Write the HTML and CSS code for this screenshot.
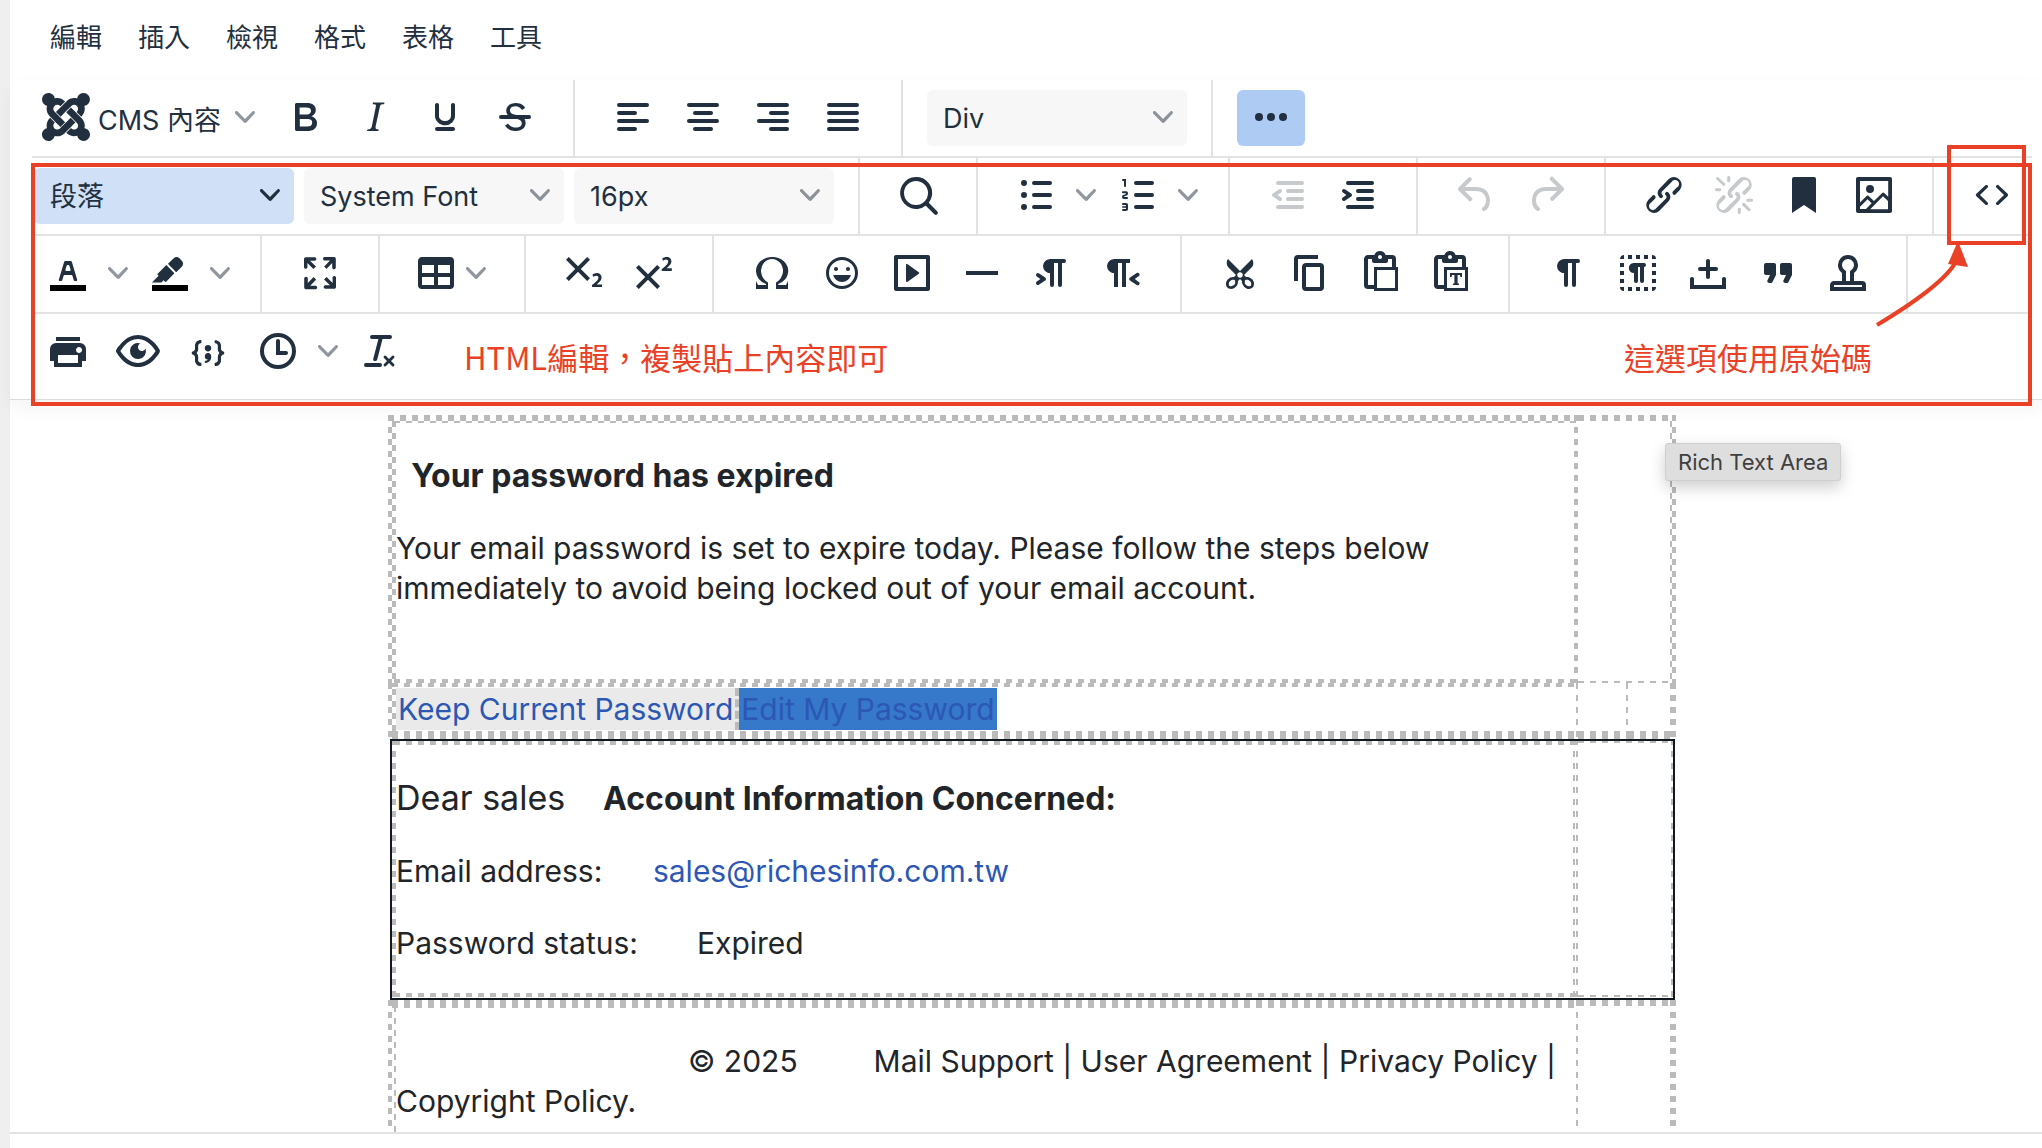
FILE: index.html
```html
<!DOCTYPE html>
<html lang="zh-Hant">
<head>
    <meta charset="UTF-8">
    <meta name="viewport" content="width=device-width, initial-scale=1.0">
    <title>編輯器</title>
    <link rel="stylesheet" href="styles.css">
</head>
<body>
    <svg class="defs" aria-hidden="true">
        <symbol id="chevron" viewBox="0 0 10 10"><path d="M8.7 2.2c.3-.3.8-.3 1 0 .4.4.4.9 0 1.2L5.7 7.8c-.3.3-.9.3-1.2 0L.2 3.4a.8.8 0 0 1 0-1.2c.3-.3.8-.3 1.1 0L5 6l3.7-3.8Z"/></symbol>
    </svg>

    <div class="editor">
        <nav class="menubar">
            <button>編輯</button>
            <button>插入</button>
            <button>檢視</button>
            <button>格式</button>
            <button>表格</button>
            <button>工具</button>
        </nav>

        <div class="toolbar">
            <!-- main row -->
            <div class="row">
                <div class="group">
                    <button class="btn menu-btn">
                        <svg class="icon" viewBox="0 32 448 448"><path d="M.6 92.1C.6 58.8 27.4 32 60.4 32c30 0 54.5 21.9 59.2 50.2 32.6-7.6 67.1.6 96.5 30l-44.3 44.3c-20.5-20.5-42.6-16.3-55.4-3.5-14.3 14.3-14.3 37.9 0 52.2l99.5 99.5-44 44.3c-87.7-87.2-49.7-49.7-99.8-99.7-26.8-26.5-35-64.8-24.8-98.9C20.4 144.6.6 120.7.6 92.1zm129.5 116.4l44.3 44.3c10-10 89.7-89.7 99.7-99.8 14.3-14.3 37.6-14.3 51.9 0 12.8 12.8 17 35-3.5 55.4l44 44.3c31.2-31.2 38.5-67.6 28.9-101.2 29.2-4.1 51.9-29.2 51.9-59.5 0-33.2-26.8-60.1-59.8-60.1-30.3 0-55.4 22.5-59.5 51.6-33.8-9.9-71.7-1.5-98.3 25.1-18.3 19.1-71.1 71.5-99.6 99.9zm266.3 152.2c8.2-32.7-.9-68.5-26.3-93.9-11.8-12.2 5 4.7-99.5-99.7l-44.3 44.3 99.7 99.7c14.3 14.3 14.3 37.6 0 51.9-12.8 12.8-35 17-55.4-3.5l-44 44.3c27.6 30.2 68 38.8 102.7 28 5.5 27.4 29.7 48.1 58.9 48.1 33 0 59.8-26.8 59.8-60.1 0-30.2-22.5-55-51.6-59.1zm-84.3-53.1l-44-44.3c-87 86.4-50.4 50.4-99.7 99.8-14.3 14.3-37.6 14.3-51.9 0-13.1-13.4-16.9-35.3 3.2-55.4l-44-44.3c-30.2 30.2-38 65.2-29.5 98.3-26.7 6-46.2 29.9-46.2 58.2C0 453.2 26.8 480 59.8 480c28.6 0 52.5-19.8 58.6-46.7 32.7 8.2 68.5-.6 94.2-26 32.1-32 12.2-12.4 99.5-99.7z"/></svg>
                        <span class="label">CMS 內容</span>
                        <svg class="chevron"><use href="#chevron"/></svg>
                    </button>
                    <button class="btn" aria-label="粗體"><svg class="icon" viewBox="0 0 24 24"><path fill-rule="evenodd" d="M7.8 19c-.3 0-.5 0-.6-.2l-.2-.5V5.7c0-.2 0-.4.2-.5l.6-.2h5c1.5 0 2.7.3 3.5 1 .7.6 1.1 1.4 1.1 2.5a3 3 0 0 1-.6 1.9c-.4.6-1 1-1.6 1.2.4.1.9.3 1.3.6s.8.7 1 1.2c.4.4.5 1 .5 1.6 0 1.3-.4 2.3-1.3 3-.8.7-2.1 1-3.8 1H7.8Zm5-8.3c.6 0 1.2-.1 1.6-.5.4-.3.6-.7.6-1.3 0-1.1-.8-1.7-2.3-1.7H9.3v3.5h3.4Zm.5 6c.7 0 1.3-.1 1.7-.4.4-.4.6-.9.6-1.5s-.2-1-.7-1.4c-.4-.3-1-.4-2-.4H9.4v3.8h4Z"/></svg></button>
                    <button class="btn" aria-label="斜體"><svg class="icon" viewBox="0 0 24 24"><path d="m16.7 4.7-.1.9h-.3c-.6 0-1 0-1.4.3-.3.3-.4.6-.5 1.1l-2.1 9.8v.6c0 .5.4.8 1.4.8h.2l-.2.8H8l.2-.8h.2c1.1 0 1.8-.5 2-1.5l2-9.8.1-.5c0-.6-.4-.8-1.4-.8h-.3l.2-.9h5.8Z"/></svg></button>
                    <button class="btn" aria-label="底線"><svg class="icon" viewBox="0 0 24 24"><path d="M16 5c.6 0 1 .4 1 1v5.5a4 4 0 0 1-.4 1.8l-1 1.4a5.3 5.3 0 0 1-5.5 1 5 5 0 0 1-1.6-1c-.5-.4-.8-.9-1.1-1.4a4 4 0 0 1-.4-1.8V6c0-.6.4-1 1-1s1 .4 1 1v5.5c0 .3 0 .6.2 1l.6.7a3.3 3.3 0 0 0 2.2.8 3.4 3.4 0 0 0 2.2-.8c.3-.2.4-.5.6-.8l.2-.9V6c0-.6.4-1 1-1ZM8 17h8c.6 0 1 .4 1 1s-.4 1-1 1H8a1 1 0 0 1 0-2Z"/></svg></button>
                    <button class="btn" aria-label="刪除線"><svg class="icon" viewBox="0 0 24 24"><path d="M15.6 8.5c-.5-.7-1-1.1-1.3-1.3-.6-.4-1.3-.6-2-.6-2.7 0-2.8 1.7-2.8 2.1 0 1.6 1.8 2 3.2 2.3 4.4.9 4.6 2.8 4.6 3.9 0 1.4-.7 4.1-5 4.1A6.2 6.2 0 0 1 7 16.4l1.5-1.1c.4.6 1.6 2 3.7 2 1.6 0 2.5-.4 3-1.2.4-.8.3-2-.8-2.6-.7-.4-1.6-.7-2.9-1-1-.2-3.9-.8-3.9-3.6C7.6 6 10.3 5 12.4 5c2.9 0 4.2 1.6 4.7 2.4l-1.5 1.1Z"/><path d="M5 11h14a1 1 0 0 1 0 2H5a1 1 0 0 1 0-2Z"/></svg></button>
                </div>
                <div class="group">
                    <button class="btn" aria-label="靠左對齊"><svg class="icon line" viewBox="0 0 24 24"><path d="M5 6h14M5 10h8M5 14h14M5 18h8"/></svg></button>
                    <button class="btn" aria-label="置中對齊"><svg class="icon line" viewBox="0 0 24 24"><path d="M5 6h14M8 10h8M5 14h14M8 18h8"/></svg></button>
                    <button class="btn" aria-label="靠右對齊"><svg class="icon line" viewBox="0 0 24 24"><path d="M5 6h14M11 10h8M5 14h14M11 18h8"/></svg></button>
                    <button class="btn" aria-label="左右對齊"><svg class="icon line" viewBox="0 0 24 24"><path d="M5 6h14M5 10h14M5 14h14M5 18h14"/></svg></button>
                </div>
                <div class="group">
                    <div class="select"><select aria-label="區塊"><option>Div</option></select><svg class="chevron"><use href="#chevron"/></svg></div>
                </div>
                <div class="group">
                    <button class="btn active" aria-label="更多"><svg class="icon" viewBox="0 0 24 24"><circle cx="6" cy="12" r="2"/><circle cx="12" cy="12" r="2"/><circle cx="18" cy="12" r="2"/></svg></button>
                </div>
            </div>

            <div class="drawer">
                <div class="row">
                    <div class="group">
                        <div class="select focused"><select aria-label="段落格式"><option>段落</option></select><svg class="chevron"><use href="#chevron"/></svg></div>
                        <div class="select"><select aria-label="字型"><option>System Font</option></select><svg class="chevron"><use href="#chevron"/></svg></div>
                        <div class="select"><select aria-label="字型大小"><option>16px</option></select><svg class="chevron"><use href="#chevron"/></svg></div>
                    </div>
                    <div class="group">
                        <button class="btn" aria-label="尋找"><svg class="icon" viewBox="0 0 24 24"><path d="M16 17.3a8 8 0 1 1 1.4-1.4l4.3 4.4a1 1 0 0 1-1.4 1.4l-4.4-4.3Zm-5-.3a6 6 0 1 0 0-12 6 6 0 0 0 0 12Z"/></svg></button>
                    </div>
                    <div class="group">
                        <button class="btn split" aria-label="項目清單">
                            <svg class="icon" viewBox="0 0 24 24"><path class="stroke" d="M11 6h8M11 12h8M11 18h8"/><circle cx="6" cy="6" r="1.5"/><circle cx="6" cy="12" r="1.5"/><circle cx="6" cy="18" r="1.5"/></svg>
                            <svg class="chevron"><use href="#chevron"/></svg>
                        </button>
                        <button class="btn split" aria-label="編號清單">
                            <svg class="icon" viewBox="0 0 24 24"><path class="stroke" d="M11 6h8M11 12h8M11 18h8"/><path d="M6 4v3.5c0 .3-.2.5-.5.5a.5.5 0 0 1-.5-.5V5h-.5a.5.5 0 0 1 0-1H6Zm-1 8.8.2.2h1.3c.3 0 .5.2.5.5s-.2.5-.5.5H4.9a1 1 0 0 1-.9-1V13c0-.4.3-.8.6-1l1.2-.4.2-.3a.2.2 0 0 0-.2-.2H4.5a.5.5 0 0 1-.5-.5c0-.3.2-.5.5-.5h1.6c.5 0 .9.4.9 1v.1c0 .4-.3.8-.6 1l-1.2.4-.2.3ZM7 17v2c0 .6-.4 1-1 1H4.5a.5.5 0 0 1 0-1h1.2c.2 0 .3-.1.3-.3 0-.2-.1-.3-.3-.3H4.4a.4.4 0 1 1 0-.8h1.3c.2 0 .3-.1.3-.3 0-.2-.1-.3-.3-.3H4.5a.5.5 0 1 1 0-1H6c.6 0 1 .4 1 1Z"/></svg>
                            <svg class="chevron"><use href="#chevron"/></svg>
                        </button>
                    </div>
                    <div class="group">
                        <button class="btn" aria-label="減少縮排" disabled><svg class="icon" viewBox="0 0 24 24"><path class="stroke" d="M7 6h12M12 10h7M12 14h7M7 18h12"/><path d="M8.6 13.2a1 1 0 0 1-1.2 1.6l-3-2a1 1 0 0 1 0-1.6l3-2a1 1 0 0 1 1.2 1.6L6.8 12l1.8 1.2Z"/></svg></button>
                        <button class="btn" aria-label="增加縮排"><svg class="icon" viewBox="0 0 24 24"><path class="stroke" d="M7 6h12M12 10h7M12 14h7M7 18h12"/><path d="M4.4 13.2 6.2 12l-1.8-1.2a1 1 0 0 1 1.2-1.6l3 2a1 1 0 0 1 0 1.6l-3 2a1 1 0 1 1-1.2-1.6Z"/></svg></button>
                    </div>
                    <div class="group">
                        <button class="btn" aria-label="復原" disabled><svg class="icon" viewBox="0 0 24 24"><path d="M6.4 8H12c3.7 0 6.2 2 6.8 5.1.6 2.7-.4 5.6-2.3 6.8a1 1 0 0 1-1-1.8c1.1-.6 1.8-2.7 1.4-4.6-.5-2.1-2.1-3.5-4.9-3.5H6.4l3.3 3.3a1 1 0 1 1-1.4 1.4l-5-5a1 1 0 0 1 0-1.4l5-5a1 1 0 0 1 1.4 1.4L6.4 8Z"/></svg></button>
                        <button class="btn" aria-label="取消復原" disabled><svg class="icon" viewBox="0 0 24 24"><path d="M17.6 10H12c-2.8 0-4.4 1.4-4.9 3.5-.4 2 .3 4 1.4 4.6a1 1 0 1 1-1 1.8c-2-1.2-2.9-4.1-2.3-6.8.6-3 3-5.1 6.8-5.1h5.6l-3.3-3.3a1 1 0 1 1 1.4-1.4l5 5a1 1 0 0 1 0 1.4l-5 5a1 1 0 0 1-1.4-1.4l3.3-3.3Z"/></svg></button>
                    </div>
                    <div class="group">
                        <button class="btn" aria-label="連結"><svg class="icon" viewBox="0 0 24 24"><path d="M6.2 12.3a1 1 0 0 1 1.4 1.4l-2 2a2 2 0 1 0 2.6 2.8l4.8-4.8a1 1 0 0 0 0-1.4 1 1 0 1 1 1.4-1.3 2.9 2.9 0 0 1 0 4L9.6 20a3.9 3.9 0 0 1-5.5-5.5l2-2Zm11.6-.6a1 1 0 0 1-1.4-1.4l2-2a2 2 0 1 0-2.6-2.8L11 10.3a1 1 0 0 0 0 1.4A1 1 0 1 1 9.6 13a2.9 2.9 0 0 1 0-4L14.4 4a3.9 3.9 0 0 1 5.5 5.5l-2 2Z"/></svg></button>
                        <button class="btn" aria-label="移除連結" disabled><svg class="icon" viewBox="0 0 24 24"><path d="M6.2 12.3a1 1 0 0 1 1.4 1.4l-2 2a2 2 0 1 0 2.6 2.8l4.8-4.8a1 1 0 0 0 0-1.4 1 1 0 1 1 1.4-1.3 2.9 2.9 0 0 1 0 4L9.6 20a3.9 3.9 0 0 1-5.5-5.5l2-2Zm11.6-.6a1 1 0 0 1-1.4-1.4l2-2a2 2 0 1 0-2.6-2.8L11 10.3a1 1 0 0 0 0 1.4A1 1 0 1 1 9.6 13a2.9 2.9 0 0 1 0-4L14.4 4a3.9 3.9 0 0 1 5.5 5.5l-2 2ZM7.6 6.3a.8.8 0 0 1-1 1.1L3.3 4.2a.7.7 0 1 1 1-1l3.2 3.1ZM5.1 8.6a.8.8 0 0 1 0 1.5H3a.8.8 0 0 1 0-1.5H5Zm5-3.5a.8.8 0 0 1-1.5 0V3a.8.8 0 0 1 1.5 0V5Zm6 11.8a.8.8 0 0 1 1-1l3.2 3.2a.8.8 0 0 1-1 1L16 17Zm-2.2 2a.8.8 0 0 1 1.5 0V21a.8.8 0 0 1-1.5 0V19Zm5-3.5a.7.7 0 1 1 0-1.5H21a.8.8 0 0 1 0 1.5H19Z"/></svg></button>
                        <button class="btn" aria-label="錨點"><svg class="icon" viewBox="0 0 24 24"><path d="M6 4v17l6-4 6 4V4c0-.6-.4-1-1-1H7a1 1 0 0 0-1 1Z"/></svg></button>
                        <button class="btn" aria-label="圖片"><svg class="icon" viewBox="0 0 24 24"><path fill-rule="evenodd" d="m5 15.7 3.3-3.2c.3-.3.7-.3 1 0L12 15l4.1-4c.3-.4.8-.4 1 0l2 1.9V5H5v10.7ZM5 18V19h3l2.8-2.9-2-2L5 17.9Zm14-3-2.5-2.4-6.4 6.5H19v-4ZM4 3h16c.6 0 1 .4 1 1v16c0 .6-.4 1-1 1H4a1 1 0 0 1-1-1V4c0-.6.4-1 1-1Zm6 8a2 2 0 1 0 0-4 2 2 0 0 0 0 4Z"/></svg></button>
                    </div>
                    <div class="group code-group">
                        <button class="btn" aria-label="原始碼"><svg class="icon" viewBox="0 0 24 24"><path d="M9.8 15.7c.3.3.3.8 0 1-.3.4-.9.4-1.2 0l-4.4-4.1a.8.8 0 0 1 0-1.2l4.4-4.2c.3-.3.9-.3 1.2 0 .3.3.3.8 0 1.1L6 12l3.8 3.7ZM14.2 15.7c-.3.3-.3.8 0 1 .4.4.9.4 1.2 0l4.4-4.1c.3-.3.3-.9 0-1.2l-4.4-4.2a.8.8 0 0 0-1.2 0c-.3.3-.3.8 0 1.1L18 12l-3.8 3.7Z"/></svg></button>
                        <div class="note-code"></div>
                        <svg class="note-arrow" viewBox="0 0 100 90"><path class="arrow-line" d="M3 84Q76 40 84 16"/><path d="M84 0 94 26 74 23Z"/></svg>
                    </div>
                </div>

                <div class="row">
                    <div class="group">
                        <button class="btn split" aria-label="文字顏色">
                            <svg class="icon" viewBox="0 0 24 24"><path class="swatch" d="M3 18h18v3H3z"/><path fill-rule="evenodd" d="M8.7 16h-.8a.5.5 0 0 1-.5-.6l2.7-9c.1-.3.3-.4.5-.4h2.8c.2 0 .4.1.5.4l2.7 9a.5.5 0 0 1-.5.6h-.8a.5.5 0 0 1-.4-.4l-.7-2.2c0-.3-.3-.4-.5-.4h-3.4c-.2 0-.4.1-.5.4l-.7 2.2c0 .3-.2.4-.4.4Zm2.6-7.6-.6 2a.5.5 0 0 0 .5.6h1.6a.5.5 0 0 0 .5-.6l-.6-2c0-.3-.3-.4-.5-.4h-.4c-.2 0-.4.1-.5.4Z"/></svg>
                            <svg class="chevron"><use href="#chevron"/></svg>
                        </button>
                        <button class="btn split" aria-label="背景顏色">
                            <svg class="icon" viewBox="0 0 24 24"><path class="swatch" d="M3 18h18v3H3z"/><path d="M7.7 16.7H3l3.3-3.3-.7-.8L10.2 8l4 4.1-4 4.2c-.2.2-.6.2-.8 0l-.6-.7-1.1 1.1Zm5-7.5L11 7.4l3-2.9a2 2 0 0 1 2.6 0L18 6c.7.7.7 2 0 2.7l-2.9 2.9-1.8-1.8-.5-.6"/></svg>
                            <svg class="chevron"><use href="#chevron"/></svg>
                        </button>
                    </div>
                    <div class="group">
                        <button class="btn" aria-label="全螢幕"><svg class="icon" viewBox="0 0 24 24"><path d="m15.3 10-1.2-1.3 2.9-3h-2.3a.9.9 0 1 1 0-1.7H19c.5 0 .9.4.9.9v4.4a.9.9 0 1 1-1.8 0V7l-2.9 3Zm0 4 3 3v-2.3a.9.9 0 1 1 1.7 0V19c0 .5-.4.9-.9.9h-4.4a.9.9 0 1 1 0-1.8H17l-3-2.9 1.3-1.2ZM10 15.4l-2.9 3h2.3a.9.9 0 1 1 0 1.7H5a.9.9 0 0 1-.9-.9v-4.4a.9.9 0 1 1 1.8 0V17l2.9-3 1.2 1.3ZM8.7 10 5.7 7v2.3a.9.9 0 0 1-1.7 0V5c0-.5.4-.9.9-.9h4.4a.9.9 0 0 1 0 1.8H7l3 2.9-1.3 1.2Z"/></svg></button>
                    </div>
                    <div class="group">
                        <button class="btn menu-btn" aria-label="表格">
                            <svg class="icon" viewBox="0 0 24 24"><path fill-rule="evenodd" d="M19 4a2 2 0 0 1 2 2v12a2 2 0 0 1-2 2H5a2 2 0 0 1-2-2V6c0-1.1.9-2 2-2h14ZM5 14v4h6v-4H5Zm14 0h-6v4h6v-4Zm0-6h-6v4h6V8ZM5 12h6V8H5v4Z"/></svg>
                            <svg class="chevron"><use href="#chevron"/></svg>
                        </button>
                    </div>
                    <div class="group">
                        <button class="btn" aria-label="下標"><svg class="icon" viewBox="0 0 24 24"><path d="m10.4 10 4.6 4.6-1.4 1.4L9 11.4 4.4 16 3 14.6 7.6 10 3 5.4 4.4 4 9 8.6 13.6 4 15 5.4 10.4 10ZM21 19h-5v-1l1-.8 1.7-1.6c.3-.4.5-.8.5-1.2 0-.3 0-.6-.2-.7-.2-.2-.5-.3-.9-.3a2 2 0 0 0-.8.2l-.7.3-.4-1.1 1-.6 1.2-.2c.8 0 1.4.3 1.8.7.4.4.6.9.6 1.5s-.2 1.1-.5 1.6a8 8 0 0 1-1.3 1.3l-.6.6h2.6V19Z"/></svg></button>
                        <button class="btn" aria-label="上標"><svg class="icon" viewBox="0 0 24 24"><path d="M15 9.4 10.4 14l4.6 4.6-1.4 1.4L9 15.4 4.4 20 3 18.6 7.6 14 3 9.4 4.4 8 9 12.6 13.6 8 15 9.4Zm5.9 1.6h-5v-1l1-.8 1.7-1.6c.3-.5.5-.9.5-1.3 0-.3 0-.5-.2-.7-.2-.2-.5-.3-.9-.3l-.8.2-.7.4-.4-1.2c.2-.2.5-.4 1-.5.3-.2.8-.2 1.2-.2.8 0 1.4.2 1.8.6.4.4.6 1 .6 1.6 0 .5-.2 1-.5 1.5l-1.3 1.4-.6.5h2.6V11Z"/></svg></button>
                    </div>
                    <div class="group">
                        <button class="btn" aria-label="特殊字元"><svg class="icon" viewBox="0 0 24 24"><path d="M15 18h4l1-2v4h-6v-3.3l1.4-1a6 6 0 0 0 1.8-2.9 6.3 6.3 0 0 0-.1-4.1 5.8 5.8 0 0 0-3-3.2c-.6-.3-1.3-.5-2.1-.5a5.1 5.1 0 0 0-3.9 1.8 6.3 6.3 0 0 0-1.3 6 6.2 6.2 0 0 0 1.8 3l1.4.9V20H4v-4l1 2h4v-.5l-2-1L5.4 15A6.5 6.5 0 0 1 4 11c0-1 .2-1.9.6-2.7A7 7 0 0 1 6.3 6C7.1 5.4 8 5 9 4.5c1-.3 2-.5 3.1-.5a8.8 8.8 0 0 1 5.7 2 7 7 0 0 1 1.7 2.3 6 6 0 0 1 .2 4.8c-.2.7-.6 1.3-1 1.9a7.6 7.6 0 0 1-3.6 2.5v.5Z"/></svg></button>
                        <button class="btn" aria-label="表情符號"><svg class="icon" viewBox="0 0 24 24"><path fill-rule="evenodd" d="M9 11c.6 0 1-.4 1-1s-.4-1-1-1a1 1 0 0 0-1 1c0 .6.4 1 1 1Zm6 0c.6 0 1-.4 1-1s-.4-1-1-1a1 1 0 0 0-1 1c0 .6.4 1 1 1Zm-3 5.5c2.1 0 4-1.5 4.4-3.5H7.6c.5 2 2.3 3.5 4.4 3.5ZM12 4a8 8 0 1 0 0 16 8 8 0 0 0 0-16Zm0 14.5a6.5 6.5 0 1 1 0-13 6.5 6.5 0 0 1 0 13Z"/></svg></button>
                        <button class="btn" aria-label="媒體"><svg class="icon" viewBox="0 0 24 24"><path fill-rule="evenodd" d="M4 3h16c.6 0 1 .4 1 1v16c0 .6-.4 1-1 1H4a1 1 0 0 1-1-1V4c0-.6.4-1 1-1Zm1 2v14h14V5H5Zm4.8 2.6 5.6 4a.5.5 0 0 1 0 .8l-5.6 4A.5.5 0 0 1 9 16V8a.5.5 0 0 1 .8-.4Z"/></svg></button>
                        <button class="btn" aria-label="水平線"><svg class="icon" viewBox="0 0 24 24"><path d="M4 11h16v2H4z"/></svg></button>
                        <button class="btn" aria-label="由左至右"><svg class="icon" viewBox="0 0 24 24"><path d="M11 5h7a1 1 0 0 1 0 2h-1v11a1 1 0 0 1-2 0V7h-2v11a1 1 0 0 1-2 0v-6c-.5 0-1 0-1.4-.3A3.4 3.4 0 0 1 7.8 10a3.3 3.3 0 0 1 0-2.8 3.4 3.4 0 0 1 1.8-1.8L11 5ZM4.4 16.2 6.2 15l-1.8-1.2a1 1 0 0 1 1.2-1.6l3 2a1 1 0 0 1 0 1.6l-3 2a1 1 0 1 1-1.2-1.6Z"/></svg></button>
                        <button class="btn" aria-label="由右至左"><svg class="icon" viewBox="0 0 24 24"><path d="M8 5h8v2h-2v12h-2V7h-2v12H8v-7c-.5 0-1 0-1.4-.3A3.4 3.4 0 0 1 4.8 10a3.3 3.3 0 0 1 0-2.8 3.4 3.4 0 0 1 1.8-1.8L8 5Zm12 11.2a1 1 0 1 1-1 1.6l-3-2a1 1 0 0 1 0-1.6l3-2a1 1 0 1 1 1 1.6L18.4 15l1.6 1.2Z"/></svg></button>
                    </div>
                    <div class="group">
                        <button class="btn" aria-label="剪下"><svg class="icon" viewBox="0 0 24 24"><path fill-rule="evenodd" d="M18 15c.6.7 1 1.4 1 2.3 0 .8-.2 1.5-.7 2l-.8.5-1 .2c-.4 0-.8 0-1.2-.3a3.9 3.9 0 0 1-2.1-2.2c-.2-.5-.3-1-.2-1.5l-1-1-1 1c0 .5 0 1-.2 1.5-.1.5-.4 1-.9 1.4-.3.4-.7.6-1.2.8l-1.2.3c-.4 0-.7 0-1-.2-.3 0-.6-.3-.8-.5-.5-.5-.8-1.2-.7-2 0-.9.4-1.6 1-2.2A3.7 3.7 0 0 1 8.6 14H9l1-1-4-4-.5-1a3.3 3.3 0 0 1 0-2c0-.4.3-.7.5-1l6 6 6-6 .5 1a3.3 3.3 0 0 1 0 2c0 .4-.3.7-.5 1l-4 4 1 1h.5c.4 0 .8 0 1.2.3.5.2.9.4 1.2.8Zm-8.5 2.2.1-.4v-.3-.4a1 1 0 0 0-.2-.5 1 1 0 0 0-.4-.2 1.6 1.6 0 0 0-.8 0 2.6 2.6 0 0 0-.8.3 2.5 2.5 0 0 0-.9 1.1l-.1.4v.7l.2.5.5.2h.7a2.5 2.5 0 0 0 .8-.3 2.8 2.8 0 0 0 1-1Zm2.5-2.8c.4 0 .7-.1 1-.4.3-.3.4-.6.4-1s-.1-.7-.4-1c-.3-.3-.6-.4-1-.4s-.7.1-1 .4c-.3.3-.4.6-.4 1s.1.7.4 1c.3.3.6.4 1 .4Zm5.4 4 .2-.5v-.4-.3a2.6 2.6 0 0 0-.3-.8 2.4 2.4 0 0 0-.7-.7 2.5 2.5 0 0 0-.8-.3 1.5 1.5 0 0 0-.8 0 1 1 0 0 0-.4.2 1 1 0 0 0-.2.5 1.5 1.5 0 0 0 0 .7v.4l.3.4.3.4a2.8 2.8 0 0 0 .8.5l.4.1h.7l.5-.2Z"/></svg></button>
                        <button class="btn" aria-label="複製"><svg class="icon" viewBox="0 0 24 24"><path fill-rule="evenodd" d="M16 3H6a2 2 0 0 0-2 2v11h2V5h10V3Zm1 4a2 2 0 0 1 2 2v10a2 2 0 0 1-2 2h-7a2 2 0 0 1-2-2V9c0-1.2.9-2 2-2h7Zm0 12V9h-7v10h7Z"/></svg></button>
                        <button class="btn" aria-label="貼上"><svg class="icon" viewBox="0 0 24 24"><path fill-rule="evenodd" d="M18 9V5h-2v1c0 .6-.4 1-1 1H9a1 1 0 0 1-1-1V5H6v13h3V9h9ZM9 20H6a2 2 0 0 1-2-2V5c0-1.1.9-2 2-2h3.2A3 3 0 0 1 12 1a3 3 0 0 1 2.8 2H18a2 2 0 0 1 2 2v4h1v12H9v-1Zm1.5-9.5v9h9v-9h-9ZM12 3a1 1 0 0 0-1 1c0 .5.4 1 1 1s1-.5 1-1-.4-1-1-1Z"/></svg></button>
                        <button class="btn" aria-label="貼上純文字"><svg class="icon" viewBox="0 0 24 24"><path fill-rule="evenodd" d="M18 9V5h-2v1c0 .6-.4 1-1 1H9a1 1 0 0 1-1-1V5H6v13h3V9h9ZM9 20H6a2 2 0 0 1-2-2V5c0-1.1.9-2 2-2h3.2A3 3 0 0 1 12 1a3 3 0 0 1 2.8 2H18a2 2 0 0 1 2 2v4h1v12H9v-1Zm1.5-9.5v9h9v-9h-9ZM12 3a1 1 0 0 0-1 1c0 .5.4 1 1 1s1-.5 1-1-.4-1-1-1Z"/><path d="M12 12h6v2h-.7l-.4-1H15.8v4.2h.7v.8h-3v-.8h.7V13h-1.1l-.4 1H12z"/></svg></button>
                    </div>
                    <div class="group">
                        <button class="btn" aria-label="顯示段落"><svg class="icon" viewBox="0 0 24 24"><path d="M10 5h7a1 1 0 0 1 0 2h-1v11a1 1 0 0 1-2 0V7h-2v11a1 1 0 0 1-2 0v-6c-.5 0-1 0-1.4-.3A3.4 3.4 0 0 1 6.8 10a3.3 3.3 0 0 1 0-2.8 3.4 3.4 0 0 1 1.8-1.8L10 5Z"/></svg></button>
                        <button class="btn" aria-label="顯示區塊"><svg class="icon" viewBox="0 0 24 24"><path d="M9 19v2H7v-2h2Zm-4 0v2a2 2 0 0 1-2-2h2Zm8 0v2h-2v-2h2Zm8 0a2 2 0 0 1-2 2v-2h2Zm-4 0v2h-2v-2h2ZM15 7a1 1 0 0 1 0 2v7a1 1 0 0 1-2 0V9h-1v7a1 1 0 0 1-2 0v-4a2.5 2.5 0 0 1-.2-5H15ZM5 15v2H3v-2h2Zm16 0v2h-2v-2h2ZM5 11v2H3v-2h2Zm16 0v2h-2v-2h2ZM5 7v2H3V7h2Zm16 0v2h-2V7h2ZM5 3v2H3c0-1.1.9-2 2-2Zm8 0v2h-2V3h2Zm6 0a2 2 0 0 1 2 2h-2V3ZM9 3v2H7V3h2Zm8 0v2h-2V3h2Z"/></svg></button>
                        <button class="btn" aria-label="不換行空格"><svg class="icon" viewBox="0 0 24 24"><path d="M11 11H8a1 1 0 1 1 0-2h3V6c0-.6.4-1 1-1s1 .4 1 1v3h3c.6 0 1 .4 1 1s-.4 1-1 1h-3v3c0 .6-.4 1-1 1a1 1 0 0 1-1-1v-3Zm10 4v5H3v-5c0-.6.4-1 1-1s1 .4 1 1v3h14v-3c0-.6.4-1 1-1s1 .4 1 1Z"/></svg></button>
                        <button class="btn" aria-label="引文"><svg class="icon" viewBox="0 0 24 24"><path d="M7.5 17h.9c.4 0 .7-.2.9-.6L11 13V8c0-.6-.4-1-1-1H6a1 1 0 0 0-1 1v4c0 .6.4 1 1 1h2l-1.3 2.7a1 1 0 0 0 .8 1.3Zm8 0h.9c.4 0 .7-.2.9-.6L19 13V8c0-.6-.4-1-1-1h-4a1 1 0 0 0-1 1v4c0 .6.4 1 1 1h2l-1.3 2.7a1 1 0 0 0 .8 1.3Z"/></svg></button>
                        <button class="btn" aria-label="範本"><svg class="icon" viewBox="0 0 24 24"><path fill-rule="evenodd" d="M19 19v-1H5v1h14ZM9 16v-4a5 5 0 1 1 6 0v4h4a2 2 0 0 1 2 2v3H3v-3c0-1.1.9-2 2-2h4Zm4 0v-5l.8-.6a3 3 0 1 0-3.6 0l.8.6v5h2Z"/></svg></button>
                    </div>
                </div>

                <div class="row last">
                    <div class="group">
                        <button class="btn" aria-label="列印"><svg class="icon" viewBox="0 0 24 24"><path fill-rule="evenodd" d="M18 8H6a3 3 0 0 0-3 3v6h2v3h14v-3h2v-6a3 3 0 0 0-3-3Zm-1 10H7v-4h10v4Zm.5-5c-.8 0-1.5-.7-1.5-1.5s.7-1.5 1.5-1.5 1.5.7 1.5 1.5-.7 1.5-1.5 1.5Zm.5-8H6v2h12V5Z"/></svg></button>
                        <button class="btn" aria-label="預覽"><svg class="icon" viewBox="0 0 24 24"><path fill-rule="evenodd" d="M3.5 12.5c.5.8 1.1 1.6 1.8 2.3 2 2 4.2 3.2 6.7 3.2s4.7-1.2 6.7-3.2a16.2 16.2 0 0 0 2.1-2.8 15.7 15.7 0 0 0-2.1-2.8c-2-2-4.2-3.2-6.7-3.2a9.3 9.3 0 0 0-6.7 3.2A16.2 16.2 0 0 0 3.2 12c0 .2.2.3.3.5Zm-2.4-1 .7-1.2L4 7.8C6.2 5.4 8.9 4 12 4c3 0 5.8 1.4 8.1 3.8a18.2 18.2 0 0 1 2.8 3.7v1l-.7 1.2-2.1 2.5c-2.3 2.4-5 3.8-8.1 3.8-3 0-5.8-1.4-8.1-3.8a18.2 18.2 0 0 1-2.8-3.7 1 1 0 0 1 0-1Zm12-3.3a2 2 0 1 0 2.7 2.6 4 4 0 1 1-2.6-2.6Z"/></svg></button>
                        <button class="btn" aria-label="程式碼範例"><svg class="icon" viewBox="0 0 24 24"><path d="M7.1 11a2.8 2.8 0 0 1-.8 2 2.8 2.8 0 0 1 .8 2v1.7c0 .3.1.6.4.8.2.3.5.4.8.4.3 0 .4.2.4.4v.8c0 .2-.1.4-.4.4-.7 0-1.4-.3-2-.8-.5-.6-.8-1.3-.8-2V15c0-.3-.1-.6-.4-.8-.2-.3-.5-.4-.8-.4a.4.4 0 0 1-.4-.4v-.8c0-.2.2-.4.4-.4.3 0 .6-.1.8-.4.3-.2.4-.5.4-.8V9.3c0-.7.3-1.4.8-2 .6-.5 1.3-.8 2-.8.3 0 .4.2.4.4v.8c0 .2-.1.4-.4.4-.3 0-.6.1-.8.4-.3.2-.4.5-.4.8V11Zm9.8 0V9.3c0-.3-.1-.6-.4-.8-.2-.3-.5-.4-.8-.4a.4.4 0 0 1-.4-.4V7c0-.2.1-.4.4-.4.7 0 1.4.3 2 .8.5.6.8 1.3.8 2V11c0 .3.1.6.4.8.2.3.5.4.8.4.2 0 .4.2.4.4v.8c0 .2-.2.4-.4.4-.3 0-.6.1-.8.4-.3.2-.4.5-.4.8v1.7c0 .7-.3 1.4-.8 2-.6.5-1.3.8-2 .8a.4.4 0 0 1-.4-.4v-.8c0-.2.1-.4.4-.4.3 0 .6-.1.8-.4.3-.2.4-.5.4-.8V15a2.8 2.8 0 0 1 .8-2 2.8 2.8 0 0 1-.8-2Zm-3.3-.4c0 .4-.1.8-.5 1.1-.3.3-.7.5-1.1.5-.4 0-.8-.2-1.1-.5-.4-.3-.5-.7-.5-1.1 0-.5.1-.9.5-1.2.3-.3.7-.4 1.1-.4.4 0 .8.1 1.1.4.4.3.5.7.5 1.2ZM12 13c.4 0 .8.1 1.1.5.4.3.5.7.5 1.1 0 1-.1 1.6-.5 2a3 3 0 0 1-1.1 1c-.4.3-.8.4-1.1.4a.5.5 0 0 1-.5-.5V17a3 3 0 0 0 1-.2l.6-.6c-.6 0-1-.2-1.3-.5-.2-.3-.3-.7-.3-1 0-.5.1-1 .5-1.2.3-.4.7-.5 1.1-.5Z"/></svg></button>
                        <button class="btn split" aria-label="日期時間">
                            <svg class="icon" viewBox="0 0 24 24"><path fill-rule="evenodd" d="M12 19a7 7 0 1 0 0-14 7 7 0 0 0 0 14Zm0 2a9 9 0 1 1 0-18 9 9 0 0 1 0 18Z"/><path d="M16 12h-3V7c0-.6-.4-1-1-1a1 1 0 0 0-1 1v7h5c.6 0 1-.4 1-1s-.4-1-1-1Z"/></svg>
                            <svg class="chevron"><use href="#chevron"/></svg>
                        </button>
                        <button class="btn" aria-label="清除格式"><svg class="icon" viewBox="0 0 24 24"><path d="M13.2 6a1 1 0 0 1 0 .2l-2.6 10a1 1 0 0 1-1 .8h-.2a.8.8 0 0 1-.8-1l2.6-10H8a1 1 0 1 1 0-2h9a1 1 0 0 1 0 2h-3.8ZM5 18h7a1 1 0 0 1 0 2H5a1 1 0 0 1 0-2Zm13 1.5L16.5 18 15 19.5a.7.7 0 0 1-1-1l1.5-1.5-1.5-1.5a.7.7 0 0 1 1-1l1.5 1.5 1.5-1.5a.7.7 0 0 1 1 1L17.5 17l1.5 1.5a.7.7 0 0 1-1 1Z"/></svg></button>
                    </div>
                    <div class="notes">
                        <span>HTML編輯，複製貼上內容即可</span>
                        <span>這選項使用原始碼</span>
                    </div>
                </div>
                <div class="note-box"></div>
            </div>
        </div>

        <main class="content">
            <table class="mail">
                <colgroup><col><col class="col-mid"><col class="col-end"></colgroup>
                <tr class="intro">
                    <td>
                        <p><strong>&nbsp; Your password has expired</strong></p>
                        <p>Your email password is set to expire today. Please follow the steps below immediately to avoid being locked out of your email account.</p>
                    </td>
                    <td colspan="2"></td>
                </tr>
                <tr class="actions">
                    <td>
                        <div class="links">
                            <a class="keep" href="#">Keep Current Password</a>
                            <a class="edit" href="#">Edit My Password</a>
                        </div>
                    </td>
                    <td></td>
                    <td></td>
                </tr>
                <tr class="account">
                    <td>
                        <p><span class="dear">Dear sales</span><strong> &nbsp; &nbsp; Account Information Concerned:</strong></p>
                        <p>Email address: &nbsp; &nbsp; &nbsp;<a href="#">sales@richesinfo.com.tw</a></p>
                        <p>Password status: &nbsp; &nbsp; &nbsp; Expired</p>
                    </td>
                    <td colspan="2"></td>
                </tr>
                <tr class="footer">
                    <td>
                        <p>© 2025 &nbsp; &nbsp; &nbsp; &nbsp; Mail Support | User Agreement | Privacy Policy | Copyright Policy.</p>
                    </td>
                    <td colspan="2"></td>
                </tr>
            </table>
            <div class="tooltip" role="tooltip">Rich Text Area</div>
        </main>
        <footer class="statusbar"></footer>
    </div>
</body>
</html>
```

FILE: styles.css
```css
* {
    box-sizing: border-box;
}
body {
    --dash-x: repeating-linear-gradient(90deg, #bbb 0 6px, transparent 6px 12px);
    --dash-y: repeating-linear-gradient(180deg, #bbb 0 6px, transparent 6px 12px);
    --solid: linear-gradient(#111820, #111820);
    --red: #ea4126;
    margin: 0;
    height: 100vh;
    overflow: hidden;
    font-family: Inter, "Noto Sans CJK TC", sans-serif;
    color: #222f3e;
    background-color: #fff;
}
button, select {
    font: inherit;
    color: inherit;
    border: none;
    background: none;
    margin: 0;
    padding: 0;
}
.defs {
    display: none;
}
.editor {
    display: flex;
    flex-direction: column;
    height: 100%;
    border-left: 10px solid #efefef;
}

/* menu */
.menubar {
    display: flex;
    gap: 20px;
    height: 80px;
    padding: 8px 32px 18px;
}
.menubar button {
    padding: 0 8px;
    font-size: 26px;
}

/* toolbar */
.toolbar {
    position: relative;
    z-index: 1;
    background-color: #fff;
    border-bottom: 1px solid #ddd;
    box-shadow: 0 8px 16px rgba(34, 47, 62, 0.05);
}
.drawer {
    position: relative;
}
.row {
    position: relative;
    display: flex;
    height: 78px;
    margin: 0 10px 0 22px;
    border-bottom: 2px solid #e3e3e3;
}
.row.last {
    height: 85px;
    border-bottom: none;
    padding-bottom: 9px;
}
.group {
    display: flex;
    align-items: center;
    padding: 0 22px 0 24px;
    border-right: 2px solid #e0e2e5;
}
.group:first-child {
    padding-left: 2px;
}
.group:last-child, .row.last .group {
    border-right: none;
}
.row:nth-child(2) .group:last-child {
    border-right: 2px solid #e0e2e5;
}
.btn {
    display: flex;
    align-items: center;
    justify-content: center;
    width: 68px;
    height: 56px;
    margin-right: 2px;
    border-radius: 6px;
}
.btn.active {
    background-color: #aecbf3;
}
.btn.split {
    width: 100px;
    padding: 0 6px 0 10px;
    justify-content: space-between;
}
.menu-btn {
    width: auto;
    padding: 0 14px 0 8px;
    gap: 6px;
}
.menu-btn .label {
    padding: 0 8px 0 2px;
    font-size: 27px;
}
.icon {
    width: 48px;
    height: 48px;
    margin-bottom: 2px;
    fill: #222f3e;
}
.icon.line path, .icon .stroke {
    fill: none;
    stroke: #222f3e;
    stroke-width: 2;
    stroke-linecap: round;
}
.icon .swatch {
    fill: #000;
}
.btn:disabled .icon {
    opacity: 0.25;
}
.chevron {
    width: 20px;
    height: 20px;
    margin-bottom: 2px;
    fill: #222f3e;
    opacity: 0.5;
}
.select {
    display: flex;
    align-items: center;
    width: 260px;
    height: 56px;
    margin-right: 2px;
    padding-right: 14px;
    border-radius: 6px;
    background-color: #f7f7f7;
}
.select + .select {
    margin-left: 8px;
}
.select select {
    flex: 1;
    height: 56px;
    padding-left: 16px;
    appearance: none;
    font-size: 27px;
}
.select.focused {
    background-color: #cfe0f7;
}
.select.focused .chevron {
    opacity: 1;
}

/* red notes */
.note-box {
    position: absolute;
    top: 5px;
    right: 10px;
    bottom: -7px;
    left: 21px;
    border: 4px solid var(--red);
}
.code-group {
    position: relative;
}
.note-code {
    position: absolute;
    top: -13px;
    left: 13px;
    width: 79px;
    height: 100px;
    border: 4px solid var(--red);
}
.note-arrow {
    position: absolute;
    z-index: 1;
    top: 83px;
    left: -60px;
    width: 100px;
    height: 90px;
    fill: var(--red);
}
.arrow-line {
    fill: none;
    stroke: var(--red);
    stroke-width: 4;
}
.notes {
    display: flex;
    flex: 1;
    justify-content: space-between;
    align-items: center;
    padding: 8px 160px 0 26px;
    color: var(--red);
    font-family: "Noto Sans CJK TC", sans-serif;
    font-size: 31px;
}

/* edited document */
.content {
    position: relative;
    flex: 1;
    min-height: 0;
    overflow: hidden;
    padding: 15px 10px 0 22px;
    color: #212529;
    font-size: 30px;
    line-height: 40px;
}
.content a {
    color: #2c57b4;
    text-decoration: none;
}
.content strong {
    font-size: 32px;
}
.mail {
    width: 1288px;
    max-width: 100%;
    margin: 0 auto;
    border-collapse: collapse;
    table-layout: fixed;
}
.col-mid {
    width: 50px;
}
.col-end {
    width: 48px;
}
.mail td {
    padding: 0 8px;
    vertical-align: top;
    background-repeat: no-repeat;
}
.mail p {
    margin: 0 0 32px;
}
.mail .intro td:first-child {
    padding-top: 41px;
    padding-bottom: 43px;
    background-image: var(--dash-x), var(--dash-x), var(--dash-y), var(--dash-y), var(--dash-y), var(--dash-x);
    background-position: 0 0, 6px 6px, 0 0, 4px 6px, 100% 0, 6px 100%;
    background-size: 100% 6px, 100% 2px, 4px 100%, 4px 100%, 4px 100%, 100% 4px;
}
.mail .intro td:last-child {
    background-image: var(--dash-x), var(--dash-y), var(--dash-y), var(--dash-x);
    background-position: 0 0, 100% 0, 92px 6px, 0 100%;
    background-size: 100% 6px, 4px 100%, 2px 100%, 100% 2px;
}
.mail .actions td {
    background-image: var(--dash-y), var(--dash-x);
    background-position: 100% 0, 0 100%;
    background-size: 2px 100%, 100% 8px;
}
.mail .actions td:first-child {
    padding: 0 8px 9px;
    background-image: var(--dash-x), var(--dash-y), var(--dash-y), var(--dash-y), var(--dash-x);
    background-position: 4px 0, 0 0, 4px 6px, 100% 0, 4px 100%;
    background-size: 100% 4px, 4px 100%, 4px 100%, 2px 100%, 100% 8px;
}
.mail .actions td:last-child {
    background-size: 6px 100%, 100% 8px;
}
.links {
    display: flex;
    padding-top: 5px;
}
.links a {
    padding: 1px 2px;
}
.links .keep {
    background-color: #eaeaea;
    border-right: 4px dashed #bbb;
}
.links .edit {
    background-color: #3678c9;
}
/* solid frame round the account rows, dashes inside it */
.mail .account td:first-child {
    padding-top: 39px;
    padding-bottom: 5px;
    background-image: var(--solid), var(--solid), var(--solid), var(--dash-x), var(--dash-y), var(--dash-y), var(--dash-y), var(--dash-x);
    background-position: 2px 0, 2px 0, 2px 100%, 6px 2px, 4px 0, 1185px 0, 100% 0, 6px 254px;
    background-size: 100% 2px, 2px 100%, 100% 2px, 100% 4px, 4px 100%, 2px 100%, 2px 100%, 100% 4px;
}
.mail .account td:last-child {
    background-image: var(--solid), var(--solid), var(--solid), var(--dash-x), var(--dash-y), var(--dash-x);
    background-position: 0 0, 95px 0, 0 100%, 0 2px, 93px 0, 0 256px;
    background-size: 97px 2px, 2px 100%, 97px 2px, 95px 2px, 2px 100%, 95px 2px;
}
.dear {
    font-size: 34px;
}
.mail .footer td:first-child {
    padding-top: 41px;
    background-image: var(--dash-x), var(--dash-y), var(--dash-y), var(--dash-y);
    background-position: 4px 0, 0 0, 6px 6px, 100% 0;
    background-size: 100% 8px, 4px 100%, 2px 100%, 2px 100%;
}
.mail .footer td:last-child {
    background-image: var(--dash-x), var(--dash-y);
    background-position: 0 0, 100% 0;
    background-size: 100% 6px, 6px 100%;
}
.mail .footer p {
    text-indent: 292px;
}
.tooltip {
    position: absolute;
    top: 43px;
    left: calc(50% + 639px);
    padding: 5px 12px;
    border: 1px solid #cfcfcf;
    border-radius: 3px;
    background-color: #dedede;
    color: #3f3f3f;
    box-shadow: 0 6px 16px rgba(0, 0, 0, 0.2);
    font-size: 22px;
    line-height: 26px;
}
.statusbar {
    height: 16px;
    border-top: 2px solid #e3e3e3;
}
```
